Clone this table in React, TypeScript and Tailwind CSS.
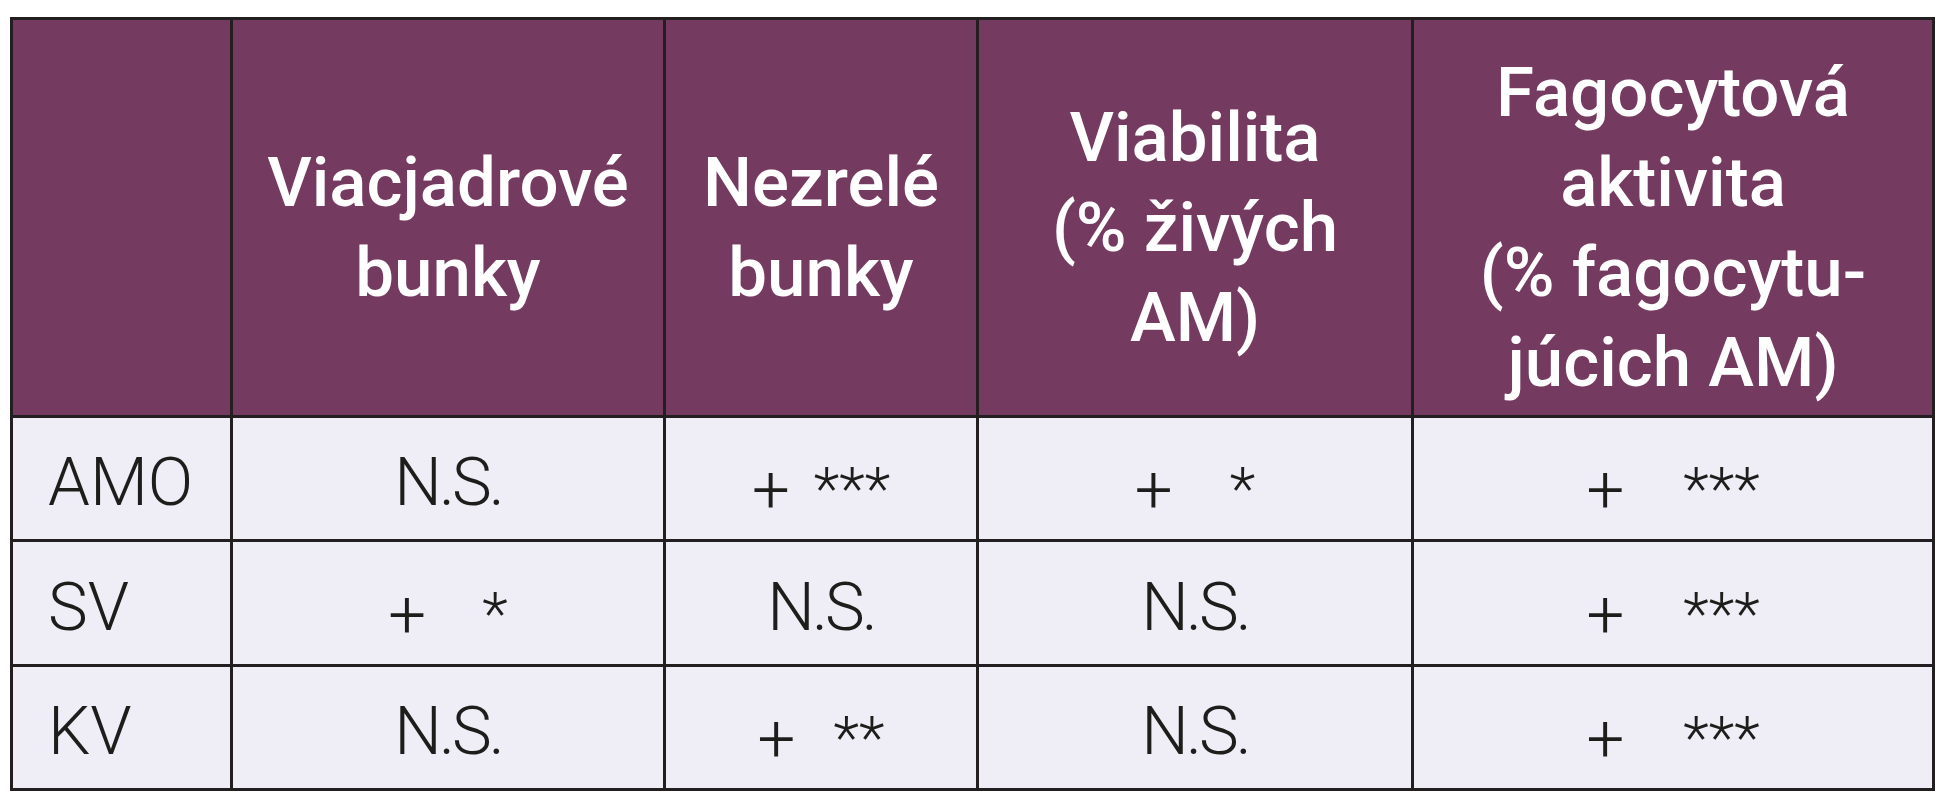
const headers = [
  [],
  ["Viacjadrové", "bunky"],
  ["Nezrelé", "bunky"],
  ["Viabilita", "(% živých", "AM)"],
  ["Fagocytová", "aktivita", "(% fagocytu-", "júcich AM)"],
];

// each cell: plus sign + asterisks, gap is the space between them in px
type Sig = { stars: string; gap: string } | null;

const rows: { label: string; cells: Sig[] }[] = [
  {
    label: "AMO",
    cells: [null, { stars: "***", gap: "ml-[24px]" }, { stars: "*", gap: "ml-[57px]" }, { stars: "***", gap: "ml-[59px]" }],
  },
  {
    label: "SV",
    cells: [{ stars: "*", gap: "ml-[56px]" }, null, null, { stars: "***", gap: "ml-[59px]" }],
  },
  {
    label: "KV",
    cells: [null, { stars: "**", gap: "ml-[38px]" }, null, { stars: "***", gap: "ml-[59px]" }],
  },
];

const bodyFont = "font-['Roboto',Arial,sans-serif] font-light";

export default function App() {
  return (
    <div className="w-[1949px] h-[800px] bg-white pt-[17px] pl-[10px]">
      <div className="w-[1925px] bg-[#231f20] p-[3px] grid grid-cols-[217px_430px_310px_432px_518px] grid-rows-[395px_121px_122px_121px] gap-[3px]">
        {headers.map((lines, i) => (
          <div
            key={i}
            className="bg-[#753a60] flex flex-col items-center justify-center text-white text-[69px] leading-[90px] font-medium font-['Roboto',Arial,sans-serif] text-center pt-[20px]"
          >
            {lines.map((l) => (
              <span key={l} className="whitespace-nowrap">{l}</span>
            ))}
          </div>
        ))}
        {rows.map((r) => (
          <Row key={r.label} label={r.label} cells={r.cells} />
        ))}
      </div>
    </div>
  );
}

function Row({ label, cells }: { label: string; cells: Sig[] }) {
  return (
    <>
      <div className={`bg-[#efedf5] flex items-center pl-[35px] pt-[8px] text-[67px] text-[#1d1d1b] ${bodyFont}`}>
        {label}
      </div>
      {cells.map((c, i) => (
        <div
          key={i}
          className={`bg-[#efedf5] flex items-center justify-center pt-[8px] text-[67px] text-[#1d1d1b] ${bodyFont}`}
        >
          {c ? (
            <span className="flex items-baseline">
              <span className="relative top-[8px]">+</span>
              <span className={`${c.gap} relative top-[4px] text-[60px]`}>{c.stars}</span>
            </span>
          ) : (
            <span className="tracking-[-3px]">N.S.</span>
          )}
        </div>
      ))}
    </>
  );
}
